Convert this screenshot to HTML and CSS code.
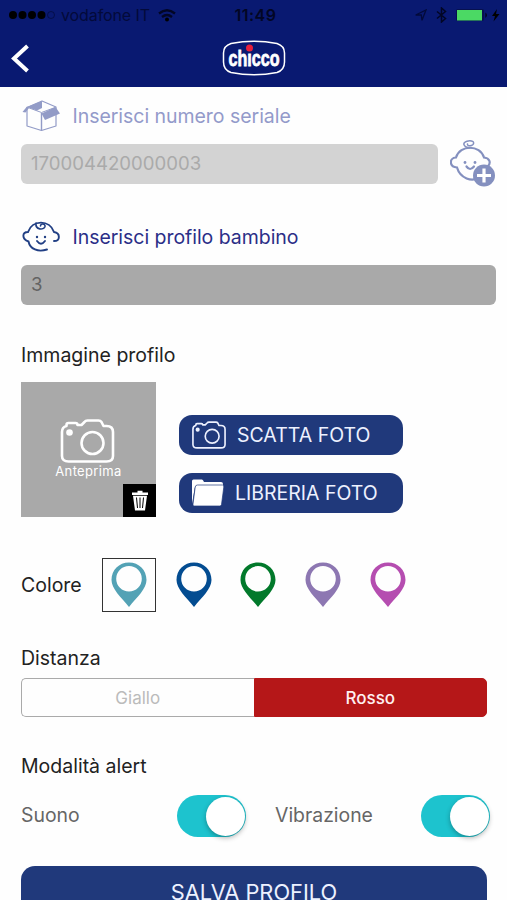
FILE: index.html
```html
<!DOCTYPE html>
<html lang="it">
<head>
<meta charset="utf-8">
<title>Profilo</title>
<link rel="stylesheet" href="styles.css">
</head>
<body>
<svg class="defs" width="0" height="0">
  <symbol id="camera" viewBox="0 0 54 44">
    <path d="M1.500 37V13Q1.500 8 6 7V6Q6 4 8 4H15Q17 4 17 6H21L24 3Q25 1.500 27 1.500H38Q40 1.500 41 3L43 7H46Q52.500 7 52.500 13V37Q52.500 42.500 46 42.500H8Q1.500 42.500 1.500 37Z" fill="none" stroke="currentColor" stroke-width="2.600" stroke-linejoin="round"/>
    <circle cx="32" cy="24" r="11" fill="none" stroke="currentColor" stroke-width="2.600"/>
    <circle cx="9" cy="13.500" r="3.300" fill="currentColor"/>
  </symbol>
  <symbol id="pin" viewBox="0 0 36 46">
    <path fill="currentColor" fill-rule="evenodd" d="M18 .5C8 .5.500 8 .500 18C.500 27 10 35 18 45C26 35 35.500 27 35.500 18C35.500 8 28 .500 18 .500ZM18 4A12.800 12.800 0 1 1 18 29.600A12.800 12.800 0 1 1 18 4Z"/>
  </symbol>
</svg>
<header class="header">
  <div class="status">
    <div class="carrier">
      <svg class="dots" width="46" height="10" viewBox="0 0 46 10"><g><circle cx="4" cy="5" r="4"/><circle cx="13.500" cy="5" r="4"/><circle cx="23" cy="5" r="4"/><circle cx="32.500" cy="5" r="4"/></g><circle cx="42" cy="5" r="3.500" fill="none" stroke="#030a3a" stroke-width=".7"/></svg>
      <span>vodafone IT</span>
      <svg class="wifi" width="18" height="13" viewBox="0 0 18 13"><g fill="none" stroke="#020624" stroke-width="2.300"><path d="M1 4.500Q9-2 17 4.500"/><path d="M4 8Q9 4 14 8"/></g><circle cx="9" cy="10.500" r="2"/></svg>
    </div>
    <div class="time">11:49</div>
    <div class="tray">
      <svg width="12" height="12" viewBox="0 0 12 12"><path d="M.7 6L11 1L7 11.300L6.300 6Z" fill="none" stroke="#030a3a" stroke-width="1.300"/></svg>
      <svg width="11" height="16" viewBox="0 0 11 16"><path d="M1 4.500L9.500 11.500L5.500 15V1L9.500 4.500L1 11.500" fill="none" stroke="#020624" stroke-width="1.500"/></svg>
      <svg width="44" height="14" viewBox="0 0 44 14"><rect x="0" y="1" width="28" height="12" rx="2" fill="#07114f"/><rect x="1" y="2" width="25" height="10.500" fill="#4bd964"/><path d="M29.500 4.500Q32 7 29.500 10Z"/><path d="M41 1L36 8H39L37.500 13.500L43.500 6H40Z"/></svg>
    </div>
  </div>
  <div class="nav">
    <svg class="back" width="20" height="30" viewBox="0 0 20 30"><path d="M16.500 2L3 14.500L16.500 27" fill="none" stroke="#fff" stroke-width="4"/></svg>
    <svg class="logo" width="64" height="37" viewBox="0 0 64 37">
      <path d="M1.500 13Q1.500 6 9 3.500Q32-1 55 3.500Q62.500 6 62.500 13V22Q62.500 30 55 32.500Q32 37 9 32.500Q1.500 30 1.500 22Z" fill="none" stroke="#fff" stroke-width="1.500"/>
      <text class="logo-text" x="6.500" y="25.500" textLength="51" lengthAdjust="spacingAndGlyphs">chıcco</text>
      <circle cx="27.500" cy="8" r="3.500" fill="#e8203c"/>
    </svg>
  </div>
</header>
<main class="form">
  <div class="field-label muted">
    <svg width="38" height="32" viewBox="0 0 38 32"><path d="M5 7.500V26L19.500 30.500L34 26V7L20 1Z" fill="#fefefe" stroke="#929bc7" stroke-width="1.200" stroke-linejoin="round"/><path d="M19.500 13V30" stroke="#929bc7" stroke-width="1.400"/><g fill="#929bc7"><path d="M20 1L5 7L15 10.500L20 8Z"/><path d="M5 6.500L.5 12L3.500 12.500L7 8Z"/><path d="M19.500 13.500L33.500 7L38 13.500L23 20Z"/></g><path d="M6 7.500L19.500 12.500L33 7.500" fill="none" stroke="#929bc7" stroke-width="1"/></svg>
    <span>Inserisci numero seriale</span>
  </div>
  <div class="serial-row">
    <div class="input input-light">170004420000003</div>
    <svg width="46" height="48" viewBox="0 0 46 48"><g fill="none" stroke="#8490bf" stroke-width="2.200" stroke-linecap="round"><path d="M30 37C22 43 10 38 7 27.500C-1 27 -1 18 6 17.500C10 4.500 30 4.500 34 17.500C40 18 41 23 38 26"/><path d="M20 8C13 7 12 2.500 17 1.200C22 0 25 2 23 4.500C21 6.500 17 6 17.500 4" stroke-width="1.500"/><path d="M16.500 26.500Q20 31.500 24 26.500"/></g><g fill="#8490bf"><circle cx="15" cy="22.500" r="1.400"/><circle cx="25" cy="22.500" r="1.400"/><circle cx="34" cy="35.500" r="11"/></g><path d="M34 28.500V42.500M27 35.500H41" stroke="#fff" stroke-width="3.200"/></svg>
  </div>
  <div class="field-label profile">
    <svg width="38" height="32" viewBox="0 0 38 32"><g fill="none" stroke="#213f84" stroke-width="1.900" stroke-linecap="round"><path d="M25 28.500C16 31.500 8 28 6.500 20.500C-.5 18 0 11 6 11C10-1.500 28-1.500 32 11C38.500 12 38.500 20 32 20"/><path d="M14 2C13 9 22 9.500 23 5.500C23.500 2.500 18.500 2 18.500 5" stroke-width="1.600"/><path d="M15 20Q19 25.500 23 20"/></g><g fill="#213f84"><circle cx="15" cy="16" r="1.200"/><circle cx="23" cy="16" r="1.200"/></g></svg>
    <span>Inserisci profilo bambino</span>
  </div>
  <div class="input input-dark">3</div>
  <h2 class="title image-title">Immagine profilo</h2>
  <div class="photo-row">
    <div class="preview">
      <svg width="55" height="44"><use href="#camera"/></svg>
      <span>Anteprima</span>
      <div class="trash"><svg width="18" height="21" viewBox="0 0 18 21"><path d="M1 2.500H6.500V.8H11.500V2.500H17V5H1ZM2 5.800H16L14 20.500H4Z" fill="#fff"/><path d="M5.500 7.500L6.500 18M9 7.500V18M12.500 7.500L11.500 18" stroke="#000" stroke-width="1"/></svg></div>
    </div>
    <div class="actions">
      <div class="button shoot"><svg width="34" height="28"><use href="#camera"/></svg><span>SCATTA FOTO</span></div>
      <div class="button library"><svg width="33" height="28" viewBox="0 0 33 28"><path d="M0 25V2Q0 .5 1.500 .5H10Q11 .5 12 3H29Q31 3 31 5V7H5Q3 7 2.700 9Z" fill="#fff"/><path d="M5.500 6H30.500Q32 6 31.800 8L29.500 25.500Q29 27 27.500 27H2Q.5 27 1 25L3.200 8Q3.500 6 5.500 6Z" fill="#fff" stroke="#20397b" stroke-width=".7"/></svg><span>LIBRERIA FOTO</span></div>
    </div>
  </div>
  <div class="colors">
    <h2 class="title">Colore</h2>
    <div class="swatches">
      <div class="swatch teal selected"><svg width="36" height="46"><use href="#pin"/></svg></div>
      <div class="swatch blue"><svg width="36" height="46"><use href="#pin"/></svg></div>
      <div class="swatch green"><svg width="36" height="46"><use href="#pin"/></svg></div>
      <div class="swatch violet"><svg width="36" height="46"><use href="#pin"/></svg></div>
      <div class="swatch pink"><svg width="36" height="46"><use href="#pin"/></svg></div>
    </div>
  </div>
  <h2 class="title distance-title">Distanza</h2>
  <div class="segments"><div class="segment">Giallo</div><div class="segment active">Rosso</div></div>
  <h2 class="title alert-title">Modalità alert</h2>
  <div class="toggles">
    <span class="sound">Suono</span><div class="toggle"><div class="knob"></div></div>
    <span class="vibration">Vibrazione</span><div class="toggle"><div class="knob"></div></div>
  </div>
  <div class="save">SALVA PROFILO</div>
</main>
</body>
</html>
```
FILE: styles.css
```css
* { box-sizing: border-box; }
body { margin: 0; height: 900px; overflow: hidden; background: #fefefe; font-family: Inter, "Liberation Sans", sans-serif; font-size: 19.5px; color: #222; }
svg { display: block; flex: none; }
.defs { position: absolute; }
.header { height: 87px; background: #091971; }
.status { height: 30px; display: grid; grid-template-columns: 1fr auto 1fr; align-items: center; padding: 0 7px 0 9px; font-size: 16px; color: #030a3a; }
.carrier { display: flex; align-items: center; }
.carrier span { margin-left: 6px; letter-spacing: -.1px; }
.wifi { margin-left: 8px; }
.time { font-weight: 600; color: #020624; letter-spacing: .5px; padding-left: 2px; }
.tray { display: flex; align-items: center; justify-content: flex-end; gap: 9px; }
.nav { height: 57px; display: grid; grid-template-columns: 1fr auto 1fr; align-items: center; padding-left: 11px; padding-right: 10px; }
.logo-text { font-family: "Liberation Sans", sans-serif; font-weight: 700; font-size: 22.5px; fill: #fff; stroke: #fff; stroke-width: .8px; }
.form { display: flex; flex-direction: column; padding: 11px 11px 0 21px; }
.field-label { display: flex; align-items: center; height: 36px; gap: 12.5px; padding-left: 1px; }
.field-label span { letter-spacing: -.04px; }
.muted { color: #939aca; }
.profile { color: #2b2e87; margin-top: 35px; }
.serial-row { display: flex; align-items: center; gap: 12px; height: 40px; margin-top: 10px; }
.input { height: 40px; border-radius: 6px; padding-left: 10px; line-height: 39px; font-size: 18.6px; }
.input-light { width: 417px; background: #d3d3d3; color: #aaa; }
.input-dark { width: 475px; margin-top: 10px; background: #a9a9a9; color: #636363; }
.title { margin: 0; font-size: 19.5px; line-height: 24px; font-weight: 400; color: #222; }
.image-title { margin-top: 38px; }
.photo-row { display: flex; height: 135px; margin-top: 15px; gap: 23px; }
.preview { position: relative; width: 135px; background: #a9a9a9; color: #fff; display: flex; flex-direction: column; align-items: center; padding-top: 37px; font-size: 13px; line-height: 17px; letter-spacing: .35px; }
.preview > svg { margin-right: 2px; }
.trash { position: absolute; right: 0; bottom: 0; width: 33px; height: 33px; background: #000; display: grid; place-items: center; }
.actions { display: flex; flex-direction: column; gap: 18px; padding-top: 33px; }
.button { width: 224px; height: 40px; border-radius: 13px; background: #20397b; color: #edf1ff; display: flex; align-items: center; padding-left: 13px; font-size: 19.5px; }
.shoot { gap: 11px; }
.library { gap: 10px; }
.colors { display: flex; align-items: center; height: 54px; margin-top: 41px; }
.colors .title { width: 81px; }
.swatches { display: flex; gap: 10.7px; }
.swatch { width: 54px; height: 54px; display: grid; place-items: center; }
.selected { border: 1px solid #333; }
.teal { color: #53a2b5; }
.blue { color: #034c91; }
.green { color: #02792b; }
.violet { color: #8d77b2; }
.pink { color: #b54db0; }
.distance-title { margin-top: 34px; }
.segments { display: flex; width: 466px; height: 39px; margin-top: 8px; font-size: 17px; }
.segment { flex: 1; display: grid; place-items: center; color: #bbb; border: 1px solid #aaa; border-right: 0; border-radius: 5px 0 0 5px; }
.active { background: #b51718; color: #fff0f0; font-weight: 500; border: 1px solid #b51718; border-radius: 0 5px 5px 0; }
.alert-title { margin-top: 37px; }
.toggles { display: flex; align-items: center; height: 42px; margin-top: 17px; color: #666; font-size: 19.4px; line-height: 24px; }
.toggles > span { padding-bottom: 2px; }
.sound { width: 156px; }
.vibration { width: 146px; margin-left: 29px; }
.toggle { width: 69px; height: 42px; border-radius: 21px; background: #1dc3ce; display: flex; align-items: center; justify-content: flex-end; padding-right: 1.5px; flex: none; }
.knob { width: 39px; height: 39px; border-radius: 50%; background: #fff; box-shadow: 0 2px 5px rgba(0,0,0,.3); }
.save { width: 466px; height: 54px; margin-top: 29px; border-radius: 14px; background: #20397b; color: #edf1ff; text-align: center; line-height: 53px; font-size: 21.8px; }
```
